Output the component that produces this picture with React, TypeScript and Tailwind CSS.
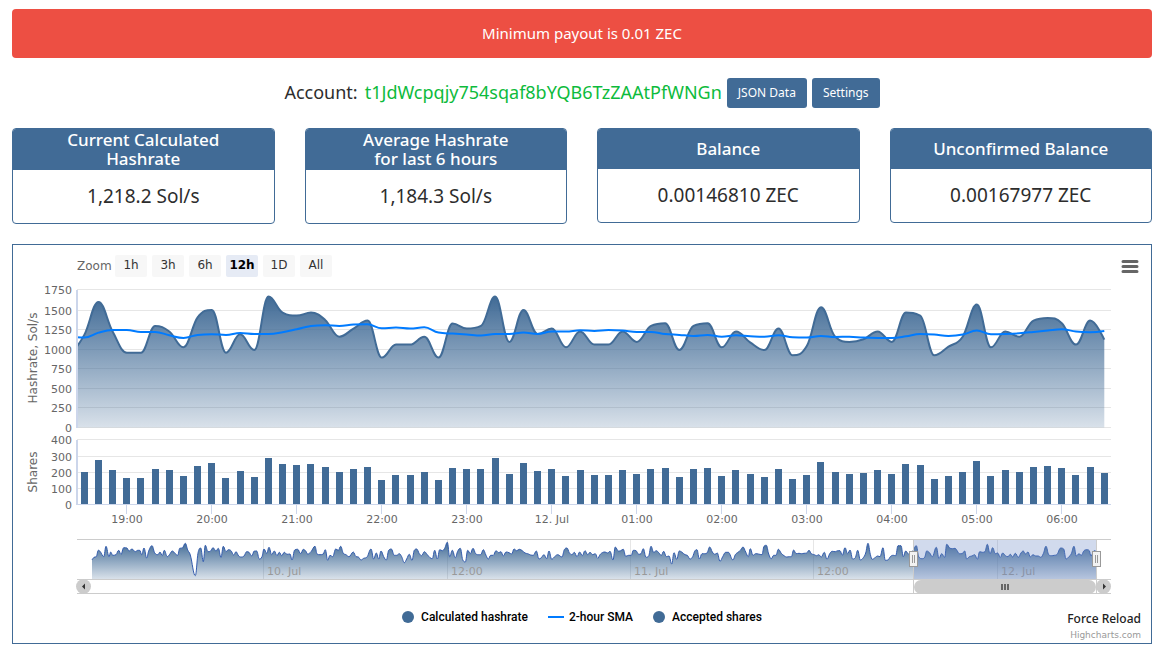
import React, { useState } from "react";

const hashrate = [
  915, 1174, 1593, 1218, 949, 949, 1288, 1218, 1017, 1398, 1491, 949, 1182, 983, 1660, 1457, 1419, 1457, 1364, 1152, 1254,
  1356, 886, 1051, 1051, 1152, 886, 1318, 1254, 1288, 1660, 1085, 1491, 1186, 1254, 1017, 1218, 1051, 1051, 1218, 1085,
  1288, 1322, 983, 1288, 1322, 1017, 1218, 1080, 983, 1254, 915, 1034, 1525, 1152, 1085, 1119, 1218, 1085, 1457, 1419,
  915, 1025, 1152, 1559, 1017, 1218, 1152, 1356, 1390, 1322, 1051, 1356, 1114,
];

const sma = [
  1152, 1140, 1203, 1237, 1237, 1212, 1212, 1169, 1136, 1174, 1182, 1174, 1199, 1186, 1186, 1208, 1246, 1288, 1297, 1288,
  1305, 1309, 1258, 1267, 1254, 1271, 1203, 1191, 1178, 1165, 1186, 1186, 1203, 1186, 1216, 1216, 1233, 1225, 1237, 1229,
  1212, 1212, 1186, 1174, 1161, 1174, 1152, 1169, 1157, 1152, 1169, 1144, 1140, 1161, 1148, 1152, 1140, 1136, 1136, 1157,
  1186, 1178, 1161, 1178, 1229, 1182, 1186, 1195, 1212, 1229, 1246, 1216, 1208, 1225,
];

const shares = [
  199, 273, 211, 162, 162, 217, 211, 174, 236, 254, 162, 205, 168, 285, 248, 242, 248, 230, 199, 217, 230, 150, 180, 180,
  199, 150, 223, 217, 217, 285, 187, 254, 205, 217, 174, 211, 180, 180, 211, 187, 217, 223, 168, 217, 223, 174, 211, 187,
  168, 217, 156, 180, 260, 199, 187, 193, 211, 187, 248, 242, 156, 174, 199, 266, 174, 211, 199, 230, 236, 223, 180, 230,
  193,
];

// full history for the navigator, three units per pixel
const history = [
  {
    start: 10,
    points:
      "246,390 252,382 259,380 265,361 271,365 281,380 288,349 297,380 302,366 308,376 318,374 326,361 333,373 341,353 351,354 357,363 366,357 376,365 383,361 389,361 395,374 402,354 410,384 416,363 426,347 434,369 444,374 450,366 457,377 463,361 472,380 479,373 487,363 496,371 503,376 509,355 517,354 526,340 533,360 541,375 556,437 565,365 572,354 580,395 586,346 594,365 602,363 609,353 618,363 625,355 633,382 640,349 648,365 655,359 663,362 671,375 678,365 686,378 694,381 702,378 710,365 717,367 725,378 733,363 740,363 748,387 756,380 762,357 770,370 777,352 785,374 793,363 801,377 808,367 815,377 823,367 831,373 840,372 846,390 854,360 863,358 872,371 880,358 887,363 893,372",
  },
  {
    start: 300,
    points:
      "33,365 45,349 51,372 60,374 70,372 76,359 83,391 90,376 98,380 107,357 115,361 122,349 130,370 138,374 147,380 160,366 168,380 175,381 183,390 191,385 200,382 213,357 221,387 229,369 236,387 243,363 251,380 259,390 266,361 274,357 283,376 290,376 298,371 305,380 313,398 320,387 328,373 336,391 343,361 350,357 358,371 365,377 373,365 382,374 390,383 397,386 404,361 412,387 419,359 427,362 434,355 442,337 449,380 457,361 466,383 473,364 481,355 488,389 496,396 503,361 511,371 519,355 527,371 535,374 542,374 550,359 558,376 565,387 572,376 580,376 588,362 596,368 603,365 610,378 618,366 627,368 635,372 642,357 650,362 658,358 667,362 675,369 683,371 692,375 700,376 709,363 717,387 724,383 732,374 740,386 747,363 755,388 763,381 773,374 786,381 793,359 801,354 808,368 816,374 823,367 831,380 839,366 847,377 855,362 863,374 870,367 878,374 886,371 893,385 900,374",
  },
  {
    start: 580,
    points:
      "67,368 75,366 83,369 90,364 99,390 106,351 115,363 122,362 130,358 137,379 146,376 154,376 160,361 168,362 176,373 183,371 190,356 198,382 206,378 213,349 221,367 229,362 237,369 244,376 251,364 259,380 267,378 275,402 282,368 290,388 298,363 306,367 315,374 322,376 330,387 338,380 345,362 351,359 358,387 366,371 374,371 381,369 389,351 397,366 405,373 412,369 420,394 428,380 437,367 445,367 459,390 466,374 474,367 482,360 489,351 497,366 505,380 511,356 519,376 527,371 535,372 546,374 552,349 559,346 566,372 574,386 581,376 588,376 595,358 604,370 612,377 620,381 628,380 634,380 641,360 648,371 657,370 664,371 672,370 680,369 687,361 694,371 703,374 710,377 716,374 724,381 733,367 741,388 749,371 757,364 766,365 773,362 780,362 787,376 795,353 803,371 810,360 818,387 826,383 833,361 841,390 850,383 857,369 864,340 871,373 877,388 885,383 893,378 900,380",
  },
  {
    start: 860,
    points:
      "69,353 76,391 84,390 91,380 100,376 107,377 114,347 123,347 130,380 137,363 145,372 152,374 159,362 169,347 176,380 186,386 194,382 200,363 209,369 217,380 229,352 237,385 245,371 254,382 260,343 269,354 277,356 285,355 292,363 298,371 306,371 314,363 320,387 328,380 336,378 344,374 352,388 359,365 367,367 375,365 382,343 390,371 398,353 406,371 413,369 421,382 428,369 436,377 444,380 451,373 458,381 466,370 475,382 483,369 490,363 496,372 504,366 511,381 519,374 527,378 535,378 542,382 550,371 558,349 566,374 574,377 583,376 590,374 602,354 611,357 618,387 626,381 634,371 642,349 649,378 657,371 664,376 672,362 681,359 688,362 693,378 702,362 708,364",
  },
];

const hashTicks = [[1750, 289], [1500, 310], [1250, 329], [1000, 349], [750, 368], [500, 388], [250, 407], [0, 427]];
const shareTicks = [[400, 439], [300, 456], [200, 472], [100, 488], [0, 504]];
const hours = ["19:00", "20:00", "21:00", "22:00", "23:00", "12. Jul", "01:00", "02:00", "03:00", "04:00", "05:00", "06:00"];
const days: [string, number][] = [["10. Jul", 263], ["12:00", 447], ["11. Jul", 630], ["12:00", 813], ["12. Jul", 997]];
const ranges = ["1h", "3h", "6h", "12h", "1D", "All"];

type Point = [number, number];

const slotX = (i: number) => 84.3 + i * 14.167;
const hashY = (v: number) => 427.5 - (v / 1750) * 138;
const shareY = (v: number) => Math.round(504.5 - (v / 400) * 65);

// spline that never overshoots a local high or low
function spline(pts: Point[]) {
  let d = `M${pts[0][0]},${pts[0][1]}`;
  let [cx, cy] = pts[0];
  for (let i = 1; i < pts.length; i++) {
    const [x, y] = pts[i];
    const [px, py] = pts[i - 1];
    let lx = x, ly = y, rx = x, ry = y;
    if (i < pts.length - 1) {
      const [nx, ny] = pts[i + 1];
      lx = (1.5 * x + px) / 2.5;
      ly = (1.5 * y + py) / 2.5;
      rx = (1.5 * x + nx) / 2.5;
      ry = (1.5 * y + ny) / 2.5;
      const shift = ((ry - ly) * (rx - x)) / (rx - lx) + y - ry;
      ly += shift;
      ry += shift;
      if (ly > py && ly > y) {
        ly = Math.max(py, y);
        ry = 2 * y - ly;
      } else if (ly < py && ly < y) {
        ly = Math.min(py, y);
        ry = 2 * y - ly;
      }
      if (ry > ny && ry > y) {
        ry = Math.max(ny, y);
        ly = 2 * y - ry;
      } else if (ry < ny && ry < y) {
        ry = Math.min(ny, y);
        ly = 2 * y - ry;
      }
    }
    d += `C${cx.toFixed(1)},${cy.toFixed(1)} ${lx.toFixed(1)},${ly.toFixed(1)} ${x.toFixed(1)},${y.toFixed(1)}`;
    cx = rx;
    cy = ry;
  }
  return d;
}

const hashLine = spline(hashrate.map((v, i): Point => [slotX(i - 1), hashY(v)]));
const smaLine = spline(sma.map((v, i): Point => [slotX(i - 1), hashY(v)]));
const historyLine = spline(
  history.flatMap(({ start, points }) =>
    points.split(" ").map((p): Point => {
      const [x, y] = p.split(",").map(Number);
      return [start + x / 3, 430 + y / 3];
    })
  )
);

export default function App() {
  const [range, setRange] = useState("12h");

  return (
    <main className="min-w-[900px] bg-white pt-[9px] pr-[10px] pb-3 pl-3 font-['Noto_Sans',sans-serif] text-[#2d2d2d]">
      <div role="alert" className="rounded bg-[#ed4f43] py-[14px] text-center text-[15px] leading-[21px] text-white">
        Minimum payout is 0.01 ZEC
      </div>

      <div className="mt-5 flex items-center justify-center gap-[5px]">
        <h1 className="flex gap-[7px] pb-[3px] text-[18px] leading-[26px]">
          Account: <span className="text-[#0dbb3c]">t1JdWcpqjy754sqaf8bYQB6TzZAAtPfWNGn</span>
        </h1>
        <button className="h-[30px] rounded-[3px] bg-[#416b96] px-[11px] text-[12px] text-white">JSON Data</button>
        <button className="h-[30px] rounded-[3px] bg-[#416b96] px-[11px] text-[12px] text-white">Settings</button>
      </div>

      <div className="mt-5 grid grid-cols-4 items-start gap-[30px]">
        <StatCard title={<>Current Calculated<br />Hashrate</>} value="1,218.2 Sol/s" />
        <StatCard title={<>Average Hashrate<br />for last 6 hours</>} value="1,184.3 Sol/s" />
        <StatCard title="Balance" value="0.00146810 ZEC" />
        <StatCard title="Unconfirmed Balance" value="0.00167977 ZEC" />
      </div>

      <section className="mt-5 border border-[#416b96]">
        <div className="flex items-center gap-[5px] pt-[10px] pr-[12px] pb-2 pl-16 font-['DejaVu_Sans',sans-serif] text-[12px]">
          <span className="w-[33px] text-[#666]">Zoom</span>
          {ranges.map((r) => (
            <button
              key={r}
              onClick={() => setRange(r)}
              className={`h-[22px] w-8 rounded-[2px] pb-[2px] leading-[20px] ${r === range ? "bg-[#e6ebf5] font-bold text-black" : "bg-[#f7f7f7] text-[#333]"}`}
            >
              {r}
            </button>
          ))}
          <button aria-label="Chart menu" className="ml-auto">
            <svg width="18" height="16" viewBox="0 0 18 16" stroke="#666" strokeWidth="3" strokeLinecap="round">
              <path d="M2 3.500H16M2 8.500H16M2 13.500H16" />
            </svg>
          </button>
        </div>

        <Chart />

        <div className="grid h-[46px] grid-cols-[1fr_auto_1fr]">
          <div className="col-start-2 flex h-10 items-center gap-5 font-['Roboto',sans-serif] text-[12px] font-medium text-black">
            <button className="flex items-center gap-[7px]"><span className="size-3 rounded-full bg-[#416b96]" />Calculated hashrate</button>
            <button className="flex items-center gap-[5px]"><span className="h-[2px] w-4 bg-[#007bff]" />2-hour SMA</button>
            <button className="flex items-center gap-[7px]"><span className="size-3 rounded-full bg-[#416b96]" />Accepted shares</button>
          </div>
          <div className="flex flex-col items-end pt-3 pr-[10px]">
            <a href="#reload" className="text-[12px] leading-[19px] font-medium text-[#222]">Force Reload</a>
            <a href="#highcharts" className="font-['DejaVu_Sans',sans-serif] text-[9px] leading-[15px] text-[#999]">Highcharts.com</a>
          </div>
        </div>
      </section>
    </main>
  );
}

function StatCard({ title, value }: { title: React.ReactNode; value: string }) {
  return (
    <div className="overflow-hidden rounded border border-[#416b96]">
      <h2 className="flex min-h-10 items-center justify-center bg-[#416b96] pt-px pb-[2px] text-center text-[17px] leading-[19px] font-medium text-white">
        <span>{title}</span>
      </h2>
      <p className="py-[13px] text-center text-[19px] leading-[27px]">{value}</p>
    </div>
  );
}

function Chart() {
  return (
    <svg viewBox="13 285 1138 312" className="block h-auto w-full font-['DejaVu_Sans',sans-serif]" role="img" aria-label="Hashrate and shares">
      <defs>
        <linearGradient id="area" x1="0" y1="0" x2="0" y2="1">
          <stop offset="0" stopColor="#416b96" />
          <stop offset="1" stopColor="#416b96" stopOpacity="0.2" />
        </linearGradient>
        <clipPath id="plot"><rect x="77" y="286" width="1034" height="142" /></clipPath>
      </defs>

      <g stroke="#e6e6e6">
        {[...hashTicks, ...shareTicks].map(([, y]) => <path key={y} d={`M77 ${y + 0.5}H1111`} />)}
      </g>
      <g fontSize="11" fill="#666" textAnchor="end">
        {[...hashTicks, ...shareTicks].map(([v, y]) => <text key={y} x="72" y={y + 5}>{v}</text>)}
      </g>
      <g fontSize="12" fill="#666" textAnchor="middle">
        <text transform="translate(37 358) rotate(-90)">Hashrate, Sol/s</text>
        <text transform="translate(37 472) rotate(-90)">Shares</text>
      </g>
      <g fontSize="11" fill="#666" textAnchor="middle">
        {hours.map((h, i) => <text key={h} x={127 + i * 85} y="523">{h}</text>)}
      </g>

      <g clipPath="url(#plot)" fill="none" strokeWidth="2">
        <path d={`${hashLine}V427.5H70Z`} fill="url(#area)" />
        <path d={hashLine} stroke="#416b96" />
        <path d={smaLine} stroke="#007bff" />
      </g>
      <g fill="#416b96">
        {shares.map((v, i) => (
          <rect key={i} x={Math.round(slotX(i) - 3.5)} y={shareY(v)} width="7" height={504 - shareY(v)} />
        ))}
      </g>
      <path d="M77 290V428M77 440V505" stroke="#ccd6eb" strokeWidth="2" />
      <path d="M77 504.500H1111" stroke="#ccd6eb" />
      {hours.map((h, i) => <path key={h} d={`M${126.5 + i * 85} 505V514`} stroke="#ccd6eb" />)}

      {/* navigator */}
      {days.map(([, x]) => <path key={x} d={`M${x + 0.5} 540V579`} stroke="#e6e6e6" />)}
      <path d={`${historyLine}V579H92Z`} fill="url(#area)" />
      <path d={historyLine} fill="none" stroke="#335cad" />
      <g fontSize="11" fill="#999">
        {days.map(([label, x]) => <text key={x} x={x + 4} y="575">{label}</text>)}
      </g>
      <rect x="913" y="540" width="184" height="39" fill="#6685c2" fillOpacity="0.3" />
      <path d="M77 539.500H1111M77 579.500H1111M77 593.500H1111M913.500 540V594M1096.500 540V594" stroke="#ccc" fill="none" />
      {[909, 1092].map((x) => (
        <g key={x} stroke="#999">
          <rect x={x + 0.5} y="551.5" width="8" height="15" fill="#f2f2f2" />
          <path d={`M${x + 3.5} 555V563M${x + 5.5} 555V563`} />
        </g>
      ))}

      {/* scrollbar */}
      <g fill="#ccc">
        <rect x="914" y="580" width="182" height="14" rx="7" />
        <circle cx="83.5" cy="586.5" r="7.5" />
        <circle cx="1103.5" cy="586.5" r="7.5" />
      </g>
      <path d="M85 583.500V589.500L82 586.500ZM1103 583.500V589.500L1106 586.500Z" fill="#333" />
      <path d="M1002 584V590M1005 584V590M1008 584V590" stroke="#666" strokeWidth="2" />
    </svg>
  );
}
